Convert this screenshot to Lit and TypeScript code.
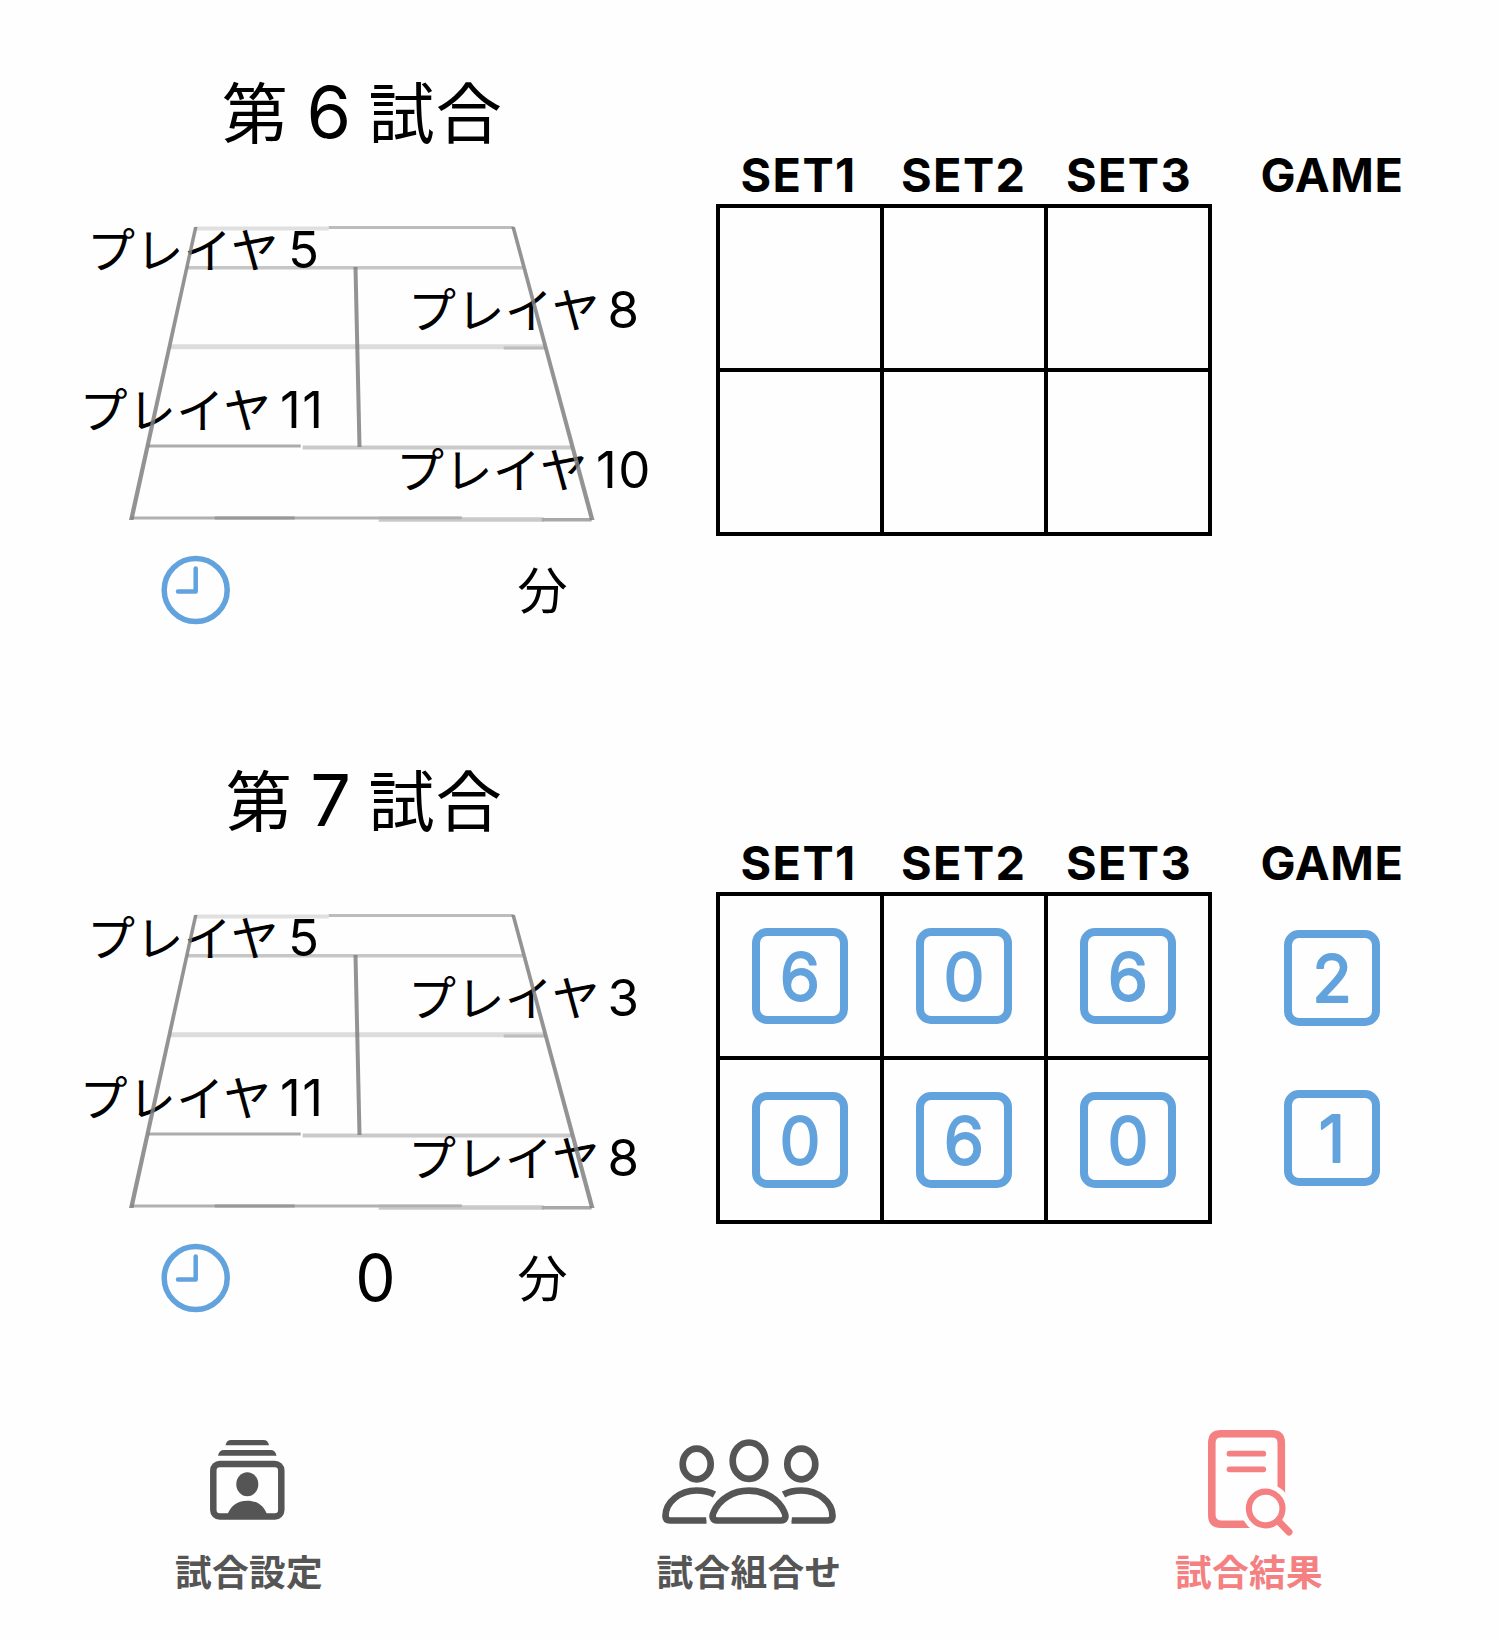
import { LitElement, html, svg, css } from "lit";
import { customElement, property } from "lit/decorators.js";

interface Player {
  no: string;
  x: number;
  numX: number;
  y: number;
}

interface Match {
  no: string;
  players: Player[];
  minutes: string;
  sets: string[][];
  games: string[];
}

const MATCHES: Match[] = [
  {
    no: "6",
    players: [
      { no: "5", x: 87, numX: 288, y: 267.5 },
      { no: "8", x: 408, numX: 607.5, y: 327.5 },
      { no: "11", x: 79.5, numX: 280, y: 427.5 },
      { no: "10", x: 396, numX: 596, y: 487.5 },
    ],
    minutes: "",
    sets: [["", "", ""], ["", "", ""]],
    games: [],
  },
  {
    no: "7",
    players: [
      { no: "5", x: 87, numX: 288, y: 267.5 },
      { no: "3", x: 408, numX: 607.5, y: 327.5 },
      { no: "11", x: 79.5, numX: 280, y: 427.5 },
      { no: "8", x: 408, numX: 607.5, y: 487.5 },
    ],
    minutes: "0",
    sets: [["6", "0", "6"], ["0", "6", "0"]],
    games: ["2", "1"],
  },
];

@customElement("score-badge")
export class ScoreBadge extends LitElement {
  @property() value = "";

  static styles = css`
    :host { display: block; width: 96px; height: 96px; }
    svg { display: block; }
    text {
      font: 400 65px Inter, sans-serif;
      fill: #62a3dd;
      stroke: #62a3dd;
      stroke-width: 1.8px;
      stroke-linejoin: round;
      text-anchor: middle;
    }
  `;

  render() {
    return html`<svg width="96" height="96" viewBox="0 0 96 96">
      <rect x="4" y="4" width="88" height="88" rx="11" fill="none" stroke="#62a3dd" stroke-width="8" />
      <text x="48" y="71.800">${this.value}</text>
    </svg>`;
  }
}

@customElement("match-court")
export class MatchCourt extends LitElement {
  @property({ attribute: false }) players: Player[] = [];

  static styles = css`
    :host { display: block; height: 330px; }
    svg { display: block; overflow: visible; }
    text { fill: #000; }
    .kana { font: 400 48px "Noto Sans CJK JP", sans-serif; letter-spacing: 0.400px; }
    .num { font: 400 51px Inter, sans-serif; letter-spacing: 1.500px; }
  `;

  render() {
    return html`<svg width="716" height="330" viewBox="0 210 716 330">
      <g fill="none" transform="translate(-1.300 0)">
        <path d="M196 228.500H330" stroke="#e0e0e0" stroke-width="4" />
        <path d="M330 227.500H515" stroke="#bcbcbc" stroke-width="3" />
        <path d="M188 267.700H524" stroke="#c6c6c6" stroke-width="3.600" />
        <path d="M171 346.700H546" stroke="#dcdcdc" stroke-width="5" />
        <path d="M505 348H546" stroke="#bdbdbd" stroke-width="3" />
        <path d="M149 446H302" stroke="#acacac" stroke-width="3" />
        <path d="M304 447.500H573" stroke="#cacaca" stroke-width="4" />
        <path d="M132 518H463" stroke="#b0b0b0" stroke-width="3" />
        <path d="M216 518H296" stroke="#989898" stroke-width="3" />
        <path d="M380 519.500H545" stroke="#cacaca" stroke-width="4.500" />
        <path d="M380 518H463" stroke="#b0b0b0" stroke-width="2.500" />
        <path d="M543 519.800H593" stroke="#a8a8a8" stroke-width="3.500" />
      </g>
      ${this.players.map(
        (p) => svg`<text class="kana" y=${p.y} x=${p.x}>プレイヤ<tspan class="num" x=${p.numX} dy="0.500">${p.no}</tspan></text>`,
      )}
      <g fill="#808080" fill-opacity=".85">
        <path d="M353.500 267H357.500L361.500 447H357.500Z" />
        <path d="M194 227H197.500L133.500 520H129Z" />
        <path d="M511.300 227H515L594.500 520H590Z" />
      </g>
    </svg>`;
  }
}

@customElement("match-card")
export class MatchCard extends LitElement {
  @property({ attribute: false }) match!: Match;

  static styles = css`
    :host { display: grid; grid-template-columns: 716px 1fr; height: 688px; box-sizing: border-box; }
    .left { display: flex; flex-direction: column; padding-top: 59px; }
    .title {
      display: flex; justify-content: flex-end; align-items: baseline; gap: 17.500px;
      height: 151px; line-height: 100px; padding-right: 213px; box-sizing: border-box;
      font: 400 66px/100px "Noto Sans CJK JP", sans-serif; letter-spacing: 1.200px; color: #000; white-space: nowrap;
    }
    .title .no { font: 400 72px/100px Inter, sans-serif; letter-spacing: 0; padding-top: 1px; }
    .time { display: grid; grid-template-columns: 161px 128px 173px 1fr; align-items: center; height: 100px; }
    .clock { grid-column: 2; }
    .minutes { font: 400 64px/100px Inter, sans-serif; text-align: center; }
    .unit { font: 400 50px/94px "Noto Sans CJK JP", sans-serif; padding: 0 0 6px 55.500px; }
    .score { display: grid; grid-template-columns: 498px 1fr; padding-top: 146px; align-content: start; }
    .heads { display: grid; grid-template-columns: repeat(3, 165.200px); height: 57.700px; }
    .head, .game-head { font: 700 46.800px/58px Inter, sans-serif; text-align: center; color: #000; letter-spacing: 1.400px; }
    .game-head { width: 236px; letter-spacing: 0.600px; }
    .board {
      display: grid; grid-template-columns: repeat(3, 160.300px); grid-template-rows: repeat(2, 160.300px);
      gap: 3.800px; padding: 3.800px; background: #000; width: 488.500px; height: 324.400px;
    }
    .cell { display: grid; place-items: center; background: #fefefe; }
    .games { display: flex; flex-direction: column; gap: 64px; padding: 38px 0 0 70px; }
  `;

  render() {
    const m = this.match;
    return html`
      <div class="left">
        <div class="title"><span>第</span><span class="no">${m.no}</span><span>試合</span></div>
        <match-court .players=${m.players}></match-court>
        <div class="time">
          <svg class="clock" width="70" height="70" viewBox="0 0 70 70" fill="none" stroke="#62a3dd">
            <circle cx="34.700" cy="35" r="31.500" stroke-width="5.500" />
            <path d="M34.700 13.500V36.500H17" stroke-width="4.500" stroke-linecap="round" stroke-linejoin="round" />
          </svg>
          <span class="minutes">${m.minutes}</span>
          <span class="unit">分</span>
        </div>
      </div>
      <div class="score">
        <div class="heads">
          ${["SET1", "SET2", "SET3"].map((h) => html`<span class="head">${h}</span>`)}
        </div>
        <div class="game-head">GAME</div>
        <div class="board">
          ${m.sets.flat().map((v) => html`<div class="cell">${v ? html`<score-badge .value=${v}></score-badge>` : ""}</div>`)}
        </div>
        <div class="games">${m.games.map((v) => html`<score-badge .value=${v}></score-badge>`)}</div>
      </div>
    `;
  }
}

@customElement("app-root")
export class AppRoot extends LitElement {
  static styles = css`
    :host { display: block; width: 1500px; height: 1640px; background: #fefefe; overflow: hidden; }
    .nav { display: grid; grid-template-columns: 498px 502px 500px; padding-top: 44px; }
    .item { display: flex; flex-direction: column; align-items: center; color: #555; }
    .item svg { display: block; }
    .item.active { color: #f48081; }
    .label { font: 600 36.700px/52px "Noto Sans CJK JP", sans-serif; margin-top: 4px; letter-spacing: 0.300px; }
    .active .label { margin-right: 2px; }
  `;

  render() {
    return html`
      ${MATCHES.map((m) => html`<match-card .match=${m}></match-card>`)}
      <div class="nav">
        <div class="item">
          <svg width="120" height="120" viewBox="189 1420 120 120" fill="currentColor">
            <path d="M225.500 1445.300Q226.500 1440 231 1440H263.500Q268 1440 269 1445.300Z" />
            <path d="M218 1455.700Q219 1450 224 1450H270.500Q275.500 1450 276.500 1455.700Z" />
            <rect x="213.300" y="1464" width="68" height="52.500" rx="6.500" fill="none" stroke="currentColor" stroke-width="6.500" />
            <ellipse cx="247.300" cy="1484.300" rx="11" ry="12" />
            <path d="M227 1516C230 1506 237 1500.700 247.300 1500.700S264.500 1506 267.500 1516Z" />
          </svg>
          <span class="label">試合設定</span>
        </div>
        <div class="item">
          <svg width="200" height="120" viewBox="649 1420 200 120" fill="none" stroke="currentColor" stroke-width="6.700">
            <ellipse cx="749" cy="1460.700" rx="16.300" ry="18.200" />
            <ellipse cx="696.700" cy="1464" rx="14" ry="15.300" />
            <ellipse cx="801.300" cy="1464" rx="14" ry="15.300" />
            <path d="M714.500 1494.500C709 1491.500 703 1490.500 696.500 1490.500C680 1490.500 665.500 1502 665.500 1516C665.500 1519 667 1520.500 670 1520.500H706.500" />
            <path d="M783.500 1494.500C789 1491.500 795 1490.500 801.500 1490.500C818 1490.500 832.500 1502 832.500 1516C832.500 1519 831 1520.500 828 1520.500H791.500" />
            <path stroke="#fefefe" stroke-width="13" d="M717 1520.500C713 1520.500 711.500 1517 713.500 1512.500C719 1499 733 1490.700 749 1490.700S779 1499 784.500 1512.500C786.500 1517 785 1520.500 781 1520.500Z" />
            <path d="M717 1520.500C713 1520.500 711.500 1517 713.500 1512.500C719 1499 733 1490.700 749 1490.700S779 1499 784.500 1512.500C786.500 1517 785 1520.500 781 1520.500Z" />
          </svg>
          <span class="label">試合組合せ</span>
        </div>
        <div class="item active">
          <svg width="120" height="120" viewBox="1190 1420 120 120" fill="none" stroke="currentColor" stroke-linecap="round">
            <path d="M1281.300 1495V1443Q1281.300 1433.800 1272 1433.800H1221Q1211.800 1433.800 1211.800 1443V1515Q1211.800 1524.200 1221 1524.200H1252" stroke-width="7.600" stroke-linecap="butt" />
            <circle cx="1265.700" cy="1508.500" r="25" fill="#fefefe" stroke="none" />
            <path d="M1229.500 1453.700H1263.300M1229.500 1469.300H1263.300" stroke-width="5.800" />
            <circle cx="1265.700" cy="1508.500" r="16.800" stroke-width="6.200" />
            <path d="M1278.500 1521.300L1289 1532" stroke-width="7" />
          </svg>
          <span class="label">試合結果</span>
        </div>
      </div>
    `;
  }
}
